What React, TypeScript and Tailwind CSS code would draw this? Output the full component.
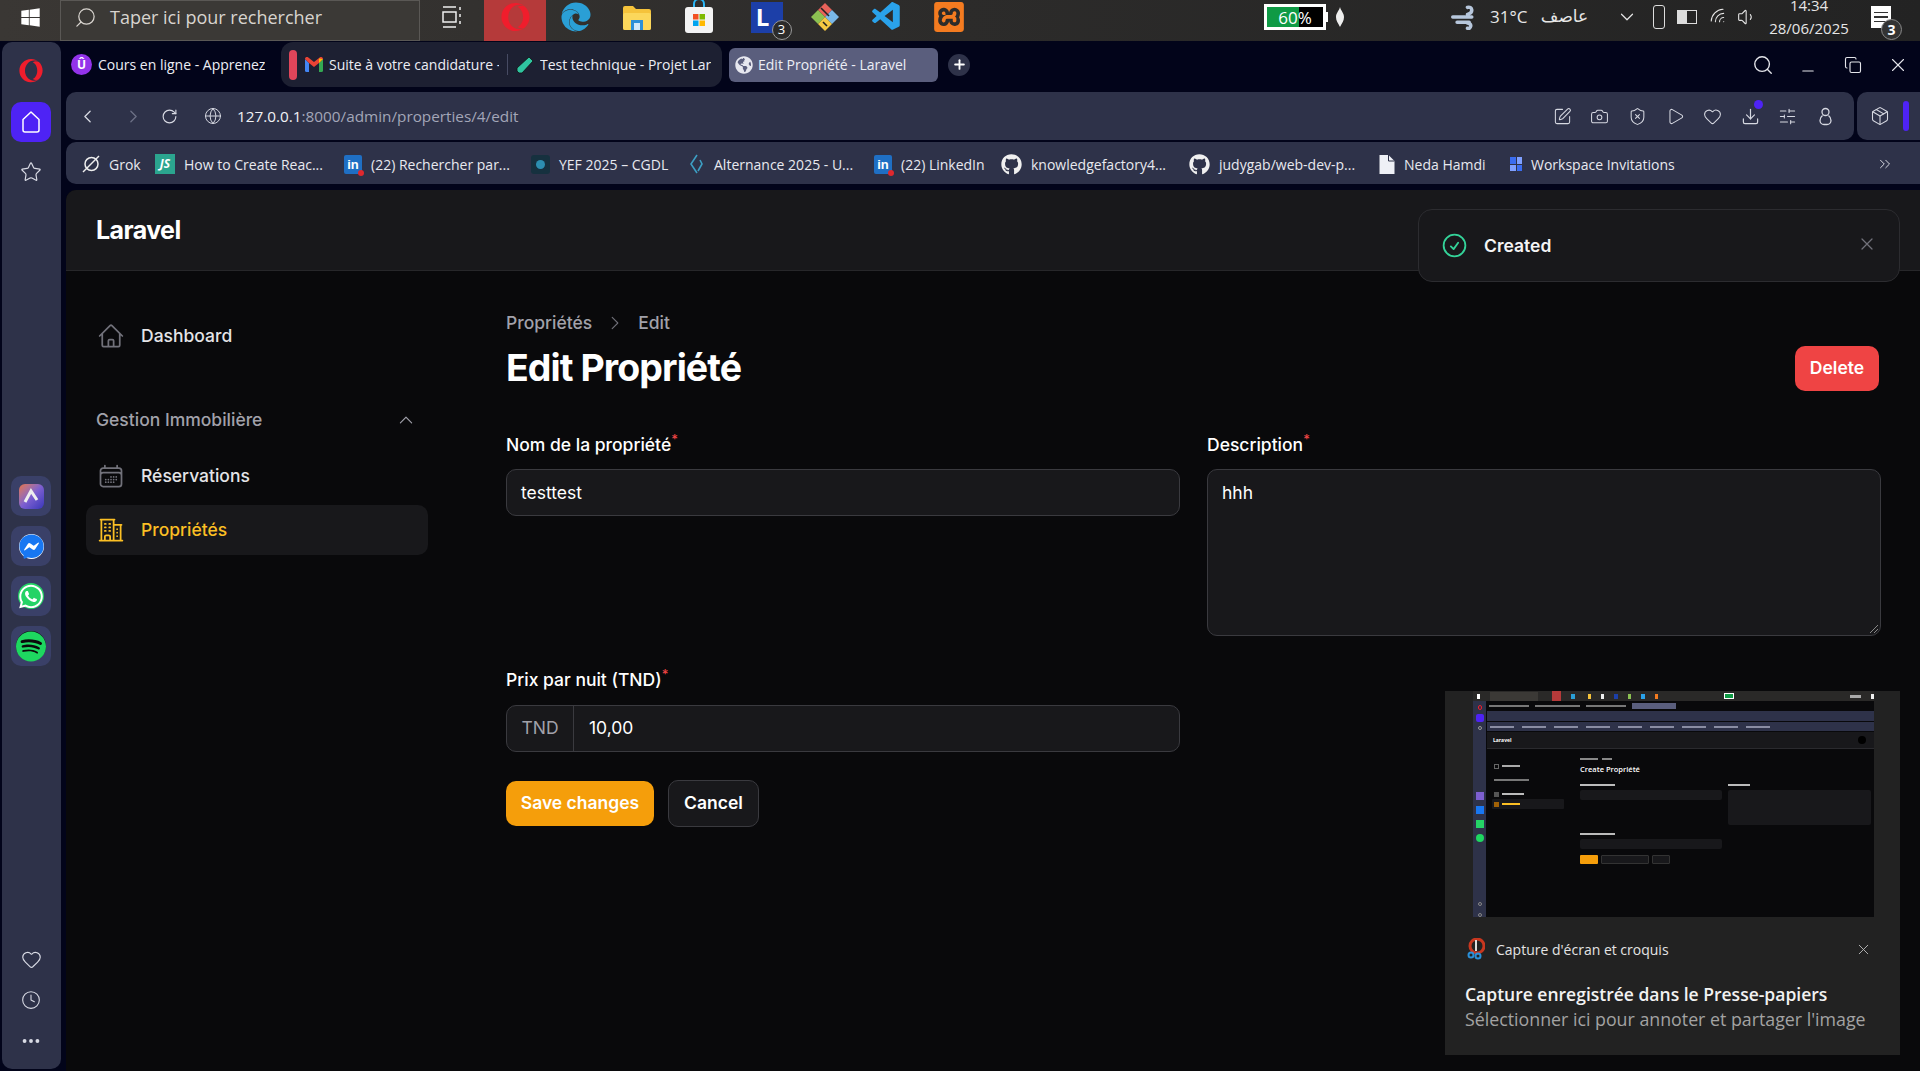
import type React from "react"
import {
    Camera,
    ChevronDown,
    ChevronLeft,
    ChevronRight,
    ChevronsRight,
    Clock,
    Copy,
    Download,
    Heart,
    Minus,
    MoreHorizontal,
    Package,
    Play,
    Plus,
    RotateCw,
    Search,
    ShieldX,
    SlidersHorizontal,
    Star,
    SquarePen,
    Volume1,
    Wifi,
    Globe,
    X,
} from "lucide-react"
import { FaEdge, FaFacebookMessenger, FaGithub, FaGlobeAmericas, FaOpera, FaSpotify, FaWhatsapp, FaWindows } from "react-icons/fa"
import { SiXampp } from "react-icons/si"
import { VscVscode } from "react-icons/vsc"
import {
    HiOutlineBuildingOffice2,
    HiOutlineCalendarDays,
    HiOutlineCheckCircle,
    HiOutlineHome,
    HiOutlineXMark,
    HiChevronUp,
    HiChevronRight,
} from "react-icons/hi2"

const Diamond = ({ size = 30 }: { size?: number }) => (
    <svg width={size} height={size} viewBox="0 0 30 30">
        <polygon points="15,1 22,8 15,15 8,8" fill="#e8625a" />
        <polygon points="22,8 29,15 22,22 15,15" fill="#7ab8e8" />
        <polygon points="8,8 15,15 8,22 1,15" fill="#8cc152" />
        <polygon points="15,15 22,22 15,29 8,22" fill="#f5c842" />
        <path d="M11 6l8 8M13 20l4 4" stroke="#222" strokeWidth="1.6" />
    </svg>
)

const StoreIcon = () => (
    <svg width="30" height="34" viewBox="0 0 30 34">
        <path d="M10 8V4a5 5 0 0 1 10 0v4" fill="none" stroke="#29b6f6" strokeWidth="2" />
        <rect x="1" y="7" width="28" height="26" rx="3" fill="#f3f3f3" />
        <rect x="9" y="14" width="5.5" height="5.5" fill="#f25022" />
        <rect x="15.5" y="14" width="5.5" height="5.5" fill="#7fba00" />
        <rect x="9" y="20.5" width="5.5" height="5.5" fill="#00a4ef" />
        <rect x="15.5" y="20.5" width="5.5" height="5.5" fill="#ffb900" />
    </svg>
)

const FolderIcon = () => (
    <svg width="30" height="30" viewBox="0 0 30 30">
        <path d="M1 6a2 2 0 0 1 2-2h8l3 3h13a2 2 0 0 1 2 2v17a2 2 0 0 1-2 2H3a2 2 0 0 1-2-2z" fill="#f5c33b" />
        <rect x="1" y="11" width="28" height="17" rx="2" fill="#fbd75b" />
        <rect x="9" y="18" width="12" height="10" fill="#2a8fd8" />
        <rect x="12" y="21" width="6" height="7" fill="#cfe8fa" />
    </svg>
)

const GmailIcon = () => (
    <svg width="18" height="15" viewBox="0 0 18 15" className="shrink-0">
        <path d="M0 2v11.5A1.5 1.5 0 0 0 1.500 15H4V6z" fill="#4285f4" />
        <path d="M18 2v11.500a1.500 1.500 0 0 1-1.500 1.500H14V6z" fill="#34a853" />
        <path d="M0 2c0-2 2-2.500 3-1.700L9 5l6-4.700c1-.8 3-.3 3 1.700l-4 4-5 4-5-4z" fill="#ea4335" />
        <path d="M14 1.500 18 2l-4 4z" fill="#fbbc04" />
    </svg>
)

const LinkedInBadge = () => (
    <span className="relative w-[18px] h-[19px] rounded-[2px] bg-[#1f6fc4] text-white text-[13px] font-bold leading-none flex items-center justify-center font-['Liberation_Sans',sans-serif]">
        in
        <span className="absolute -right-[2px] -bottom-[2px] w-[6px] h-[6px] rounded-full bg-[#e0282e]" />
    </span>
)

const ArcIcon = () => (
    <div className="w-[25px] h-[25px] rounded-[6px] bg-gradient-to-br from-[#e8703a] via-[#7d5fd0] to-[#3a35b8] flex items-center justify-center">
        <svg width="16" height="16" viewBox="0 0 16 16">
            <path d="M2 14 8 3l6 9" fill="none" stroke="#eee" strokeWidth="3" />
        </svg>
    </div>
)

const TaskSlot = ({ width, children, className = "" }: { width: number; children: React.ReactNode; className?: string }) => (
    <div className={`h-full flex items-center justify-center shrink-0 pb-[7px] ${className}`} style={{ width }}>
        {children}
    </div>
)

const Taskbar = () => (
    <div className="h-[41px] shrink-0 bg-gradient-to-r from-[#3a3734] via-[#2c2b2a] to-[#232323] flex items-center text-[#e6e6e6] font-['Open_Sans',sans-serif]">
        <TaskSlot width={60}><FaWindows size={21} color="#fff" /></TaskSlot>
        <div className="w-[360px] h-full border border-[#5a5855] bg-[#3b3936] flex items-center pl-[13px] pb-[7px] gap-[13px] text-[18px] text-[#d8d4cf] shrink-0">
            <Search size={23} strokeWidth={1.3} className="-scale-x-100" />
            <span>Taper ici pour rechercher</span>
        </div>
        <TaskSlot width={64}>
            <svg width="20" height="24" viewBox="0 0 20 24" fill="none" stroke="#eee" strokeWidth="1.5">
                <path d="M1 2h13M1 22h13M1 7h13v10H1zM18 2v3M18 9v3M18 16v3" />
            </svg>
        </TaskSlot>
        <TaskSlot width={62} className="bg-[#b53a3a]"><FaOpera size={29} color="#f01d2c" /></TaskSlot>
        <TaskSlot width={60}><FaEdge size={30} color="#2a9fd6" /></TaskSlot>
        <TaskSlot width={62}><FolderIcon /></TaskSlot>
        <TaskSlot width={62}><StoreIcon /></TaskSlot>
        <TaskSlot width={68}>
            <div className="relative ml-[5px] w-[32px] h-[31px] bg-[#1c3fa8] flex items-center justify-center text-white font-bold text-[24px] leading-none pr-[8px]">
                L
                <span className="absolute -right-[9px] bottom-[-7px] w-[20px] h-[20px] rounded-full border border-[#999] bg-[#2c2b2a] text-[13px] font-normal flex items-center justify-center">3</span>
            </div>
        </TaskSlot>
        <TaskSlot width={54}><Diamond /></TaskSlot>
        <TaskSlot width={62} className="ml-[4px]"><VscVscode size={34} color="#2aa2ea" /></TaskSlot>
        <TaskSlot width={62}><SiXampp size={30} color="#f47b20" /></TaskSlot>
        <div className="w-[284px] shrink-0" />
        <div className="w-[62px] h-[26px] mb-[7px] border-[3px] border-white bg-black flex shrink-0 relative text-[17px] text-white">
            <div className="w-[58%] h-full bg-[#0f9a45]" />
            <span className="absolute inset-0 flex items-center justify-center leading-none">60%</span>
        </div>
        <div className="w-[2px] h-[10px] mb-[7px] bg-white shrink-0" />
        <TaskSlot width={24}>
            <svg width="10" height="20" viewBox="0 0 10 20"><path d="M5 0c1 4 4 6 4 10s-2 6-4 10c-2-4-4-6-4-10s3-6 4-10z" fill="#eee" /></svg>
        </TaskSlot>
        <TaskSlot width={32} className="ml-[96px]">
            <svg width="32" height="26" viewBox="0 0 32 30" fill="none" stroke="#b7c7dc" strokeWidth="4" strokeLinecap="round">
                <path d="M3 15h22M8 21h14M20 4c5-2 8 6 0 8M20 28c4 1 6-5 0-6" />
            </svg>
        </TaskSlot>
        <TaskSlot width={48} className="ml-[10px] text-[17px] justify-start! whitespace-nowrap">31°C</TaskSlot>
        <TaskSlot width={53} className="text-[17px] font-['DejaVu_Sans',sans-serif]">عاصف</TaskSlot>
        <TaskSlot width={22} className="ml-[25px]"><ChevronDown size={22} strokeWidth={1.3} /></TaskSlot>
        <TaskSlot width={20} className="ml-[11px]">
            <div className="w-[12px] h-[24px] border border-[#ddd] rounded-[3px]" />
        </TaskSlot>
        <TaskSlot width={20} className="ml-[8px]">
            <div className="w-[20px] h-[14px] border border-[#ddd] flex"><div className="w-1/2 bg-[#ddd]" /></div>
        </TaskSlot>
        <TaskSlot width={20} className="ml-[12px]"><Wifi size={20} strokeWidth={1.3} className="-rotate-45" /></TaskSlot>
        <TaskSlot width={20} className="ml-[8px]"><Volume1 size={20} strokeWidth={1.3} /></TaskSlot>
        <div className="ml-[8px] w-[88px] shrink-0 flex flex-col items-center text-[15px] leading-[23px] h-full -mt-[13px]">
            <span>14:34</span>
            <span>28/06/2025</span>
        </div>
        <div className="relative ml-[18px] mb-[7px] w-[20px] h-[22px] bg-white shrink-0 flex flex-col justify-center gap-[3px] px-[3px]">
            <div className="h-[1.5px] bg-[#333]" />
            <div className="h-[1.5px] bg-[#333]" />
            <div className="h-[1.5px] bg-[#333]" />
            <span className="absolute -right-[11px] -bottom-[12px] w-[21px] h-[21px] rounded-full border border-[#888] bg-[#333] text-[14px] text-white flex items-center justify-center font-bold">3</span>
        </div>
    </div>
)

const OperaRail = () => (
    <div className="ml-[2px] mt-[1px] mb-[2px] w-[59px] pr-[1px] shrink-0 rounded-[10px] bg-[#2e3249] flex flex-col items-center text-[#d9dbe5]">
        <FaOpera size={24} color="#f01d2c" className="mt-[17px]" />
        <div className="mt-[19px] w-[40px] h-[40px] rounded-[10px] bg-[#4e23f5] flex items-center justify-center text-white">
            <svg width="22" height="24" viewBox="0 0 22 24" fill="none" stroke="#fff" strokeWidth="1.5" strokeLinejoin="round">
                <path d="M11 2 3 9.500V20a2 2 0 0 0 2 2h12a2 2 0 0 0 2-2V9.500z" />
            </svg>
        </div>
        <Star size={22} strokeWidth={1.3} className="mt-[19px]" />
        <div className="mt-[293px] flex flex-col gap-[10px]">
            <div className="w-[40px] h-[40px] rounded-[10px] bg-[#3a4068] flex items-center justify-center"><ArcIcon /></div>
            <div className="w-[40px] h-[40px] rounded-[10px] bg-[#3a4068] flex items-center justify-center">
                <span className="w-[25px] h-[25px] rounded-full bg-white flex items-center justify-center"><FaFacebookMessenger size={25} color="#1877f2" /></span>
            </div>
            <div className="w-[40px] h-[40px] rounded-[10px] bg-[#3a4068] flex items-center justify-center">
                <span className="w-[26px] h-[26px] rounded-full bg-[#25d366] flex items-center justify-center"><FaWhatsapp size={27} color="#fff" /></span>
            </div>
            <div className="w-[40px] h-[40px] rounded-[10px] bg-[#3a4068] flex items-center justify-center">
                <span className="w-[30px] h-[30px] rounded-full bg-[#0b0b0b] flex items-center justify-center"><FaSpotify size={31} color="#1ed760" /></span>
            </div>
        </div>
        <Heart size={21} strokeWidth={1.3} className="mt-[283px]" />
        <Clock size={20} strokeWidth={1.3} className="mt-[20px]" />
        <MoreHorizontal size={22} strokeWidth={2.2} className="mt-[20px]" />
    </div>
)

const Tab = ({ icon, title, width }: { icon: React.ReactNode; title: string; width: number }) => (
    <div className="flex items-center gap-[6px] shrink-0 overflow-hidden" style={{ width }}>
        {icon}
        <span className="whitespace-nowrap overflow-hidden text-[14px] text-[#eceef5]">{title}</span>
    </div>
)

const TabStrip = () => (
    <div className="h-[47px] shrink-0 flex items-center font-['Open_Sans',sans-serif] relative">
        <div className="ml-[5px] w-[210px] shrink-0">
            <Tab
                width={199}
                title="Cours en ligne - Apprenez"
                icon={<span className="w-[21px] h-[21px] rounded-full bg-[#9333ea] text-white text-[12px] font-bold flex items-center justify-center shrink-0">Û</span>}
            />
        </div>
        <div className="h-[45px] w-[441px] shrink-0 rounded-[12px] bg-[#1d2032] flex items-center pl-[8px]">
            <div className="w-[8px] h-[30px] rounded-full bg-[#e0455a] shrink-0" />
            <div className="ml-[8px] w-[203px] shrink-0 border-r border-[#474b63]">
                <Tab width={194} title="Suite à votre candidature -" icon={<GmailIcon />} />
            </div>
            <div className="ml-[8px]">
                <Tab
                    width={195}
                    title="Test technique - Projet Lar"
                    icon={<svg width="18" height="18" viewBox="0 0 18 18" className="shrink-0"><path d="M13 1l4 4L6 17H3l-2-2v-3z" fill="#2fc4a0" stroke="#111" strokeWidth="0.8" /></svg>}
                />
            </div>
        </div>
        <div className="ml-[7px] w-[209px] h-[34px] rounded-[6px] bg-[#5a5e7d] flex items-center pl-[6px] gap-[5px] shrink-0">
            <FaGlobeAmericas size={18} color="#e6e7ef" className="shrink-0" />
            <span className="text-[14px] text-[#eceef5] whitespace-nowrap">Edit Propriété - Laravel</span>
        </div>
        <div className="ml-[10px] w-[22px] h-[22px] rounded-full bg-[#2e3249] flex items-center justify-center text-white shrink-0">
            <Plus size={15} strokeWidth={3} />
        </div>
        <div className="ml-auto flex items-center text-[#e4e5ea]">
            <span className="w-[45px] flex justify-center"><Search size={22} strokeWidth={1.5} /></span>
            <span className="w-[45px] flex justify-center"><Minus size={18} strokeWidth={1.4} className="mt-[13px]" /></span>
            <span className="w-[45px] flex justify-center"><Copy size={18} strokeWidth={1.5} /></span>
            <span className="w-[45px] flex justify-center"><X size={22} strokeWidth={1.2} /></span>
        </div>
    </div>
)

const AddressBar = () => (
    <div className="mt-[4px] h-[48px] shrink-0 flex gap-[3px] font-['Open_Sans',sans-serif]">
        <div className="w-[1788px] rounded-[10px] bg-[#2e3249] flex items-center text-[#d7d9e2]">
            <ChevronLeft size={21} strokeWidth={1.5} className="ml-[11px]" />
            <ChevronRight size={21} strokeWidth={1.5} className="ml-[25px] text-[#6d7186]" />
            <RotateCw size={17} strokeWidth={1.6} className="ml-[17px]" />
            <Globe size={18} strokeWidth={1.3} className="ml-[26px]" />
            <span className="ml-[15px] text-[15.300px] text-[#f0f1f5]">
                127.0.0.1<span className="text-[#a3a6b8]">:8000/admin/properties/4/edit</span>
            </span>
            <div className="ml-auto mr-[19px] flex items-center gap-[18.6px]">
                <SquarePen size={19} strokeWidth={1.3} />
                <Camera size={19} strokeWidth={1.3} />
                <ShieldX size={19} strokeWidth={1.3} />
                <Play size={19} strokeWidth={1.3} />
                <Heart size={19} strokeWidth={1.3} />
                <div className="relative">
                    <Download size={19} strokeWidth={1.5} />
                    <span className="absolute -top-[7px] right-[-3px] w-[9px] h-[9px] rounded-full bg-[#4e23f5]" />
                </div>
                <SlidersHorizontal size={19} strokeWidth={1.3} />
                <svg width="19" height="19" viewBox="0 0 19 19" fill="none" stroke="currentColor" strokeWidth="1.3">
                    <circle cx="9.500" cy="5" r="3.500" />
                    <path d="M6.500 8.500c-2 1.500-2.500 3-2.500 5a4 4 0 0 0 4 4h3a4 4 0 0 0 4-4c0-2-.5-3.500-2.500-5" />
                </svg>
            </div>
        </div>
        <div className="flex-1 rounded-l-[10px] bg-[#2e3249] flex items-center text-[#d7d9e2]">
            <Package size={20} strokeWidth={1.3} className="ml-[13px]" />
            <div className="ml-[13px] w-[6px] h-[30px] rounded-full bg-[#4e23f5]" />
        </div>
    </div>
)

const bookmarks: { label: string; icon: React.ReactNode; width: number }[] = [
    { label: "Grok", width: 73, icon: <svg width="18" height="18" viewBox="0 0 18 18" fill="none" stroke="#eee" strokeWidth="1.5"><circle cx="9.500" cy="9" r="6.500" /><path d="M1 17 17 1" /></svg> },
    { label: "How to Create Reac...", width: 189, icon: <span className="w-[20px] h-[20px] bg-[#2ba58f] text-white text-[12px] italic font-bold flex items-center justify-center">JS</span> },
    { label: "(22) Rechercher par...", width: 187, icon: <LinkedInBadge /> },
    { label: "YEF 2025 – CGDL", width: 156, icon: <span className="w-[19px] h-[19px] rounded-[3px] bg-[#16313f] flex items-center justify-center"><span className="w-[9px] h-[9px] rounded-full bg-[#2c8fb0]" /></span> },
    { label: "Alternance 2025 - U...", width: 187, icon: <svg width="18" height="20" viewBox="0 0 16 20" fill="none" stroke="#3d9fc4" strokeWidth="1.600"><path d="M9 1 3 10l6 9M12 6l2 4-4 7" /></svg> },
    { label: "(22) LinkedIn", width: 127, icon: <LinkedInBadge /> },
    { label: "knowledgefactory4...", width: 188, icon: <FaGithub size={21} color="#f0f0f0" /> },
    { label: "judygab/web-dev-p...", width: 190, icon: <FaGithub size={21} color="#f0f0f0" /> },
    { label: "Neda Hamdi", width: 131, icon: <svg width="16" height="19" viewBox="0 0 15 19"><path d="M0 0h9l6 6v13H0z" fill="#eef0f6" /><path d="M9 0v6h6" fill="none" stroke="#2e3249" strokeWidth="1" /></svg> },
    { label: "Workspace Invitations", width: 170, icon: <span className="w-[12px] h-[14px] grid grid-cols-2 gap-[1px]"><span className="bg-[#3b6df0]" /><span className="bg-[#7fa0ff]" /><span className="bg-[#7fa0ff]" /><span className="bg-[#3b6df0]" /></span> },
]

const BookmarksBar = () => (
    <div className="mt-[2px] h-[42px] shrink-0 rounded-l-[10px] bg-[#2e3249] flex items-center pl-[16px] pt-[2px] font-['Open_Sans',sans-serif] text-[14px] text-[#e8e9ef]">
        {bookmarks.map((b) => (
            <div key={b.label} className="flex items-center gap-[9px] shrink-0 whitespace-nowrap" style={{ width: b.width }}>
                {b.icon}
                <span>{b.label}</span>
            </div>
        ))}
        <ChevronsRight size={18} strokeWidth={1.2} className="ml-auto mr-[26px]" />
    </div>
)

const NavItem = ({ icon, label, active }: { icon: React.ReactNode; label: string; active?: boolean }) => (
    <div className={`h-[50px] w-[342px] rounded-[10px] flex items-center gap-[16px] px-[11px] ${active ? "bg-[#18181b] text-[#fbbf24]" : "text-[#e4e4e7]"}`}>
        {icon}
        <span className="text-[17.500px] font-medium">{label}</span>
    </div>
)

const Label = ({ children }: { children: React.ReactNode }) => (
    <div className="h-[24px] flex items-center text-[17.500px] font-medium text-white">
        {children}
        <sup className="text-[#ef4444] text-[13px] font-medium">*</sup>
    </div>
)

const MiniInput = ({ className = "" }: { className?: string }) => <div className={`bg-[#18181b] rounded-[2px] ${className}`} />

const NotificationThumb = () => (
    <div className="w-[401px] h-[226px] ml-[28px] bg-[#09090b] flex flex-col overflow-hidden">
        <div className="h-[10px] bg-[#2a2928] flex items-center gap-[10px] pl-[4px]">
            <div className="w-[5px] h-[5px] bg-white" />
            <div className="w-[70px] h-[9px] bg-[#3b3936]" />
            <div className="w-[13px] h-[10px] bg-[#b53a3a] ml-[4px]" />
            <div className="w-[5px] h-[5px] bg-[#2a9fd6]" />
            <div className="w-[5px] h-[5px] bg-[#f5c33b] ml-[3px]" />
            <div className="w-[5px] h-[5px] bg-[#eee]" />
            <div className="w-[5px] h-[5px] bg-[#1c3fa8]" />
            <div className="w-[5px] h-[5px] bg-[#8cc152]" />
            <div className="w-[5px] h-[5px] bg-[#2aa2ea]" />
            <div className="w-[5px] h-[5px] bg-[#f47b20]" />
            <div className="ml-[56px] w-[13px] h-[6px] border border-white bg-[#0f9a45]" />
            <div className="ml-[106px] w-[16px] h-[3px] bg-[#aaa]" />
            <div className="w-[5px] h-[5px] bg-[#eee]" />
        </div>
        <div className="flex-1 flex">
            <div className="w-[13px] bg-[#2e3249] flex flex-col items-center pt-[4px] gap-[4px]">
                <div className="w-[4px] h-[5px] rounded-full border border-[#f01d2c]" />
                <div className="w-[8px] h-[8px] rounded-[2px] bg-[#4e23f5]" />
                <div className="w-[4px] h-[4px] border border-[#999] rounded-full" />
                <div className="mt-[58px] w-[8px] h-[8px] bg-[#7d5fd0]" />
                <div className="mt-[2px] w-[8px] h-[8px] bg-[#1877f2]" />
                <div className="mt-[2px] w-[8px] h-[8px] bg-[#25d366]" />
                <div className="mt-[2px] w-[8px] h-[8px] rounded-full bg-[#1ed760]" />
                <div className="mt-[56px] w-[4px] h-[4px] border border-[#888] rounded-full" />
                <div className="mt-[3px] w-[4px] h-[4px] border border-[#888] rounded-full" />
                <div className="mt-[3px] w-[5px] h-[1px] bg-[#ccc]" />
            </div>
            <div className="flex-1 flex flex-col ml-[1px]">
                <div className="h-[10px] flex items-center gap-[6px] pl-[2px]">
                    <div className="w-[40px] h-[2px] bg-[#777]" />
                    <div className="w-[45px] h-[2px] bg-[#777]" />
                    <div className="w-[40px] h-[2px] bg-[#777]" />
                    <div className="w-[44px] h-[6px] bg-[#5a5e7d]" />
                </div>
                <div className="h-[10px] bg-[#2e3249]" />
                <div className="mt-[1px] h-[9px] bg-[#2e3249] flex items-center gap-[8px] pl-[3px]">
                    {[1, 2, 3, 4, 5, 6, 7, 8, 9].map((n) => <div key={n} className="w-[24px] h-[2px] bg-[#8a8da3]" />)}
                </div>
                <div className="mt-[1px] h-[17px] bg-[#18181b] border-b border-[#2a2a2e] flex items-center pl-[6px] justify-between pr-[8px]">
                    <span className="text-[5px] font-bold text-white leading-none">Laravel</span>
                    <div className="w-[8px] h-[8px] rounded-full bg-black" />
                </div>
                <div className="flex pt-[7px]">
                    <div className="w-[93px] pl-[5px] pt-[5px] flex flex-col">
                        <div className="h-[10px] flex items-center gap-[3px] pl-[2px]"><div className="w-[5px] h-[5px] border border-[#666]" /><div className="w-[18px] h-[2px] bg-[#aaa]" /></div>
                        <div className="mt-[8px] w-[35px] h-[2px] ml-[2px] bg-[#777]" />
                        <div className="mt-[8px] h-[10px] flex items-center gap-[3px] pl-[2px]"><div className="w-[5px] h-[5px] bg-[#555]" /><div className="w-[22px] h-[2px] bg-[#bbb]" /></div>
                        <div className="w-[72px] h-[10px] rounded-[1px] bg-[#18181b] flex items-center gap-[3px] pl-[2px]"><div className="w-[5px] h-[5px] bg-[#a16207]" /><div className="w-[18px] h-[2px] bg-[#fbbf24]" /></div>
                    </div>
                    <div className="flex-1 pr-[3px]">
                        <div className="flex items-center gap-[4px] h-[5px]"><div className="w-[18px] h-[2px] bg-[#888]" /><div className="w-[10px] h-[2px] bg-[#888]" /></div>
                        <div className="mt-[3px] text-[7.500px] font-semibold text-white leading-[10px]">Create Propriété</div>
                        <div className="mt-[10px] grid grid-cols-[142px_143px] gap-x-[6px]">
                            <div>
                                <div className="w-[35px] h-[2px] bg-[#bbb]" />
                                <MiniInput className="mt-[4px] h-[10px]" />
                            </div>
                            <div>
                                <div className="w-[22px] h-[2px] bg-[#bbb]" />
                                <MiniInput className="mt-[4px] h-[35px]" />
                            </div>
                        </div>
                        <div className="mt-[8px] w-[35px] h-[2px] bg-[#bbb]" />
                        <MiniInput className="mt-[4px] h-[10px] w-[142px]" />
                        <div className="mt-[6px] flex gap-[3px] items-center">
                            <div className="w-[18px] h-[9px] rounded-[1px] bg-[#f59e0b]" />
                            <div className="w-[48px] h-[9px] rounded-[1px] bg-[#18181b] border border-[#333]" />
                            <div className="w-[18px] h-[9px] rounded-[1px] bg-[#18181b] border border-[#333]" />
                        </div>
                    </div>
                </div>
            </div>
        </div>
    </div>
)

export default function App() {
    return (
        <div className="w-[1920px] h-[1071px] overflow-hidden bg-[#02041a] flex flex-col relative font-['Inter',sans-serif]">
            <Taskbar />
            <div className="flex-1 min-h-0 flex">
                <OperaRail />
                <div className="flex-1 min-w-0 flex flex-col ml-[5px]">
                    <TabStrip />
                    <AddressBar />
                    <BookmarksBar />

                    {/* App */}
                    <div className="mt-[6px] flex-1 min-h-0 bg-[#09090b] rounded-tl-[10px] overflow-hidden flex flex-col">
                        <div className="h-[81px] shrink-0 bg-[#18181b] border-b border-[#27272a] flex items-center pl-[30px]">
                            <span className="text-[25px] font-bold text-white tracking-[-0.6px] pt-[1px]">Laravel</span>
                        </div>
                        <div className="flex-1 flex min-h-0">
                            <aside className="w-[374px] shrink-0 pl-[20px] pt-[40px]">
                                <NavItem label="Dashboard" icon={<HiOutlineHome size={28} color="#71717a" />} />
                                <div className="mt-[34px] w-[342px] h-[50px] flex items-center justify-between pl-[10px] pr-[13px] text-[#a1a1aa]">
                                    <span className="text-[17.500px] font-medium">Gestion Immobilière</span>
                                    <HiChevronUp size={18} />
                                </div>
                                <div className="mt-[6px] flex flex-col gap-[4px]">
                                    <NavItem label="Réservations" icon={<HiOutlineCalendarDays size={28} color="#71717a" />} />
                                    <NavItem active label="Propriétés" icon={<HiOutlineBuildingOffice2 size={28} color="#fbbf24" />} />
                                </div>
                            </aside>
                            <main className="flex-1 min-w-0 pl-[66px] pr-[39px] pt-[40px]">
                                <div className="flex justify-between items-start">
                                    <div>
                                        <div className="h-[24px] flex items-center gap-[14px] text-[17.500px] font-medium text-[#a1a1aa]">
                                            <span>Propriétés</span>
                                            <HiChevronRight size={18} color="#71717a" />
                                            <span>Edit</span>
                                        </div>
                                        <h1 className="mt-[11px] text-[37.500px] leading-[44px] font-bold tracking-[-0.94px] text-white">Edit Propriété</h1>
                                    </div>
                                    <button className="mt-[35px] mr-[2px] w-[84px] h-[45px] rounded-[10px] bg-[#ef4444] text-white text-[17.500px] font-semibold">Delete</button>
                                </div>
                                <div className="mt-[42px] grid grid-cols-[674px_674px] gap-x-[27px]">
                                    <div>
                                        <Label>Nom de la propriété</Label>
                                        <div className="mt-[12px] h-[47px] rounded-[10px] bg-[#18181b] border border-[#3a3a3f] flex items-center px-[14px] pt-[1px] text-[17.500px] text-white">testtest</div>
                                    </div>
                                    <div className="row-span-2">
                                        <Label>Description</Label>
                                        <div className="relative mt-[12px] h-[167px] rounded-[10px] bg-[#18181b] border border-[#3a3a3f] px-[14px] py-[10px] text-[17.500px] text-white">
                                            hhh
                                            <svg width="8" height="8" viewBox="0 0 8 8" className="absolute right-[2px] bottom-[2px]" stroke="#888" strokeWidth="1"><path d="M0 8 8 0M4 8l4-4" /></svg>
                                        </div>
                                    </div>
                                </div>
                                <div className="-mt-[1px] pt-[33px] w-[674px]">
                                    <Label>Prix par nuit (TND)</Label>
                                    <div className="mt-[13px] h-[47px] rounded-[10px] bg-[#18181b] border border-[#3a3a3f] flex items-center text-[17.500px]">
                                        <span className="w-[67px] h-full border-r border-[#3a3a3f] flex items-center justify-center text-[#a1a1aa] shrink-0">TND</span>
                                        <span className="pl-[15px] text-white">10,00</span>
                                    </div>
                                </div>
                                <div className="mt-[28px] flex items-center gap-[14px]">
                                    <button className="w-[148px] h-[45px] rounded-[10px] bg-[#f59e0b] text-white text-[17.500px] font-semibold">Save changes</button>
                                    <button className="w-[91px] h-[47px] rounded-[10px] bg-[#18181b] border border-[#3a3a3f] text-white text-[17.500px] font-semibold">Cancel</button>
                                </div>
                            </main>
                        </div>
                    </div>
                </div>
            </div>

            {/* Toast */}
            <div className="absolute left-[1418px] top-[209px] w-[482px] h-[73px] rounded-[14px] bg-[#18181b] border border-[#2c2c30] flex items-center pl-[21px] pr-[22px]">
                <HiOutlineCheckCircle size={29} color="#34d399" />
                <span className="ml-[15px] pt-[1px] text-[17.500px] font-semibold text-[#f4f4f5]">Created</span>
                <HiOutlineXMark size={20} color="#71717a" className="ml-auto -mt-[4px]" />
            </div>

            {/* Windows notification */}
            <div className="absolute left-[1445px] top-[691px] w-[455px] h-[364px] bg-[#222222] font-['Open_Sans',sans-serif]">
                <NotificationThumb />
                <div className="mt-[20px] pl-[22px] pr-[28px] h-[24px] flex items-center text-[14px] text-[#e4e4e4]">
                    <svg width="18" height="22" viewBox="0 0 18 22" fill="none" className="shrink-0">
                        <circle cx="10" cy="8" r="7" stroke="#c8371f" strokeWidth="3" />
                        <path d="M9 2v11" stroke="#ddd" strokeWidth="2" />
                        <circle cx="4" cy="17" r="2.500" stroke="#2a8fd8" strokeWidth="2" />
                        <circle cx="11" cy="18" r="2.500" stroke="#2a8fd8" strokeWidth="2" />
                    </svg>
                    <span className="ml-[11px]">Capture d'écran et croquis</span>
                    <X size={17} strokeWidth={1.3} className="ml-auto text-[#bbb]" />
                </div>
                <div className="mt-[21px] px-[20px] text-[18px] leading-[25px]">
                    <div className="font-semibold text-[#f2f2f2] text-[17.500px]">Capture enregistrée dans le Presse-papiers</div>
                    <div className="text-[#a3a3a3] text-[17.800px]">Sélectionner ici pour annoter et partager l'image</div>
                </div>
            </div>
        </div>
    )
}
